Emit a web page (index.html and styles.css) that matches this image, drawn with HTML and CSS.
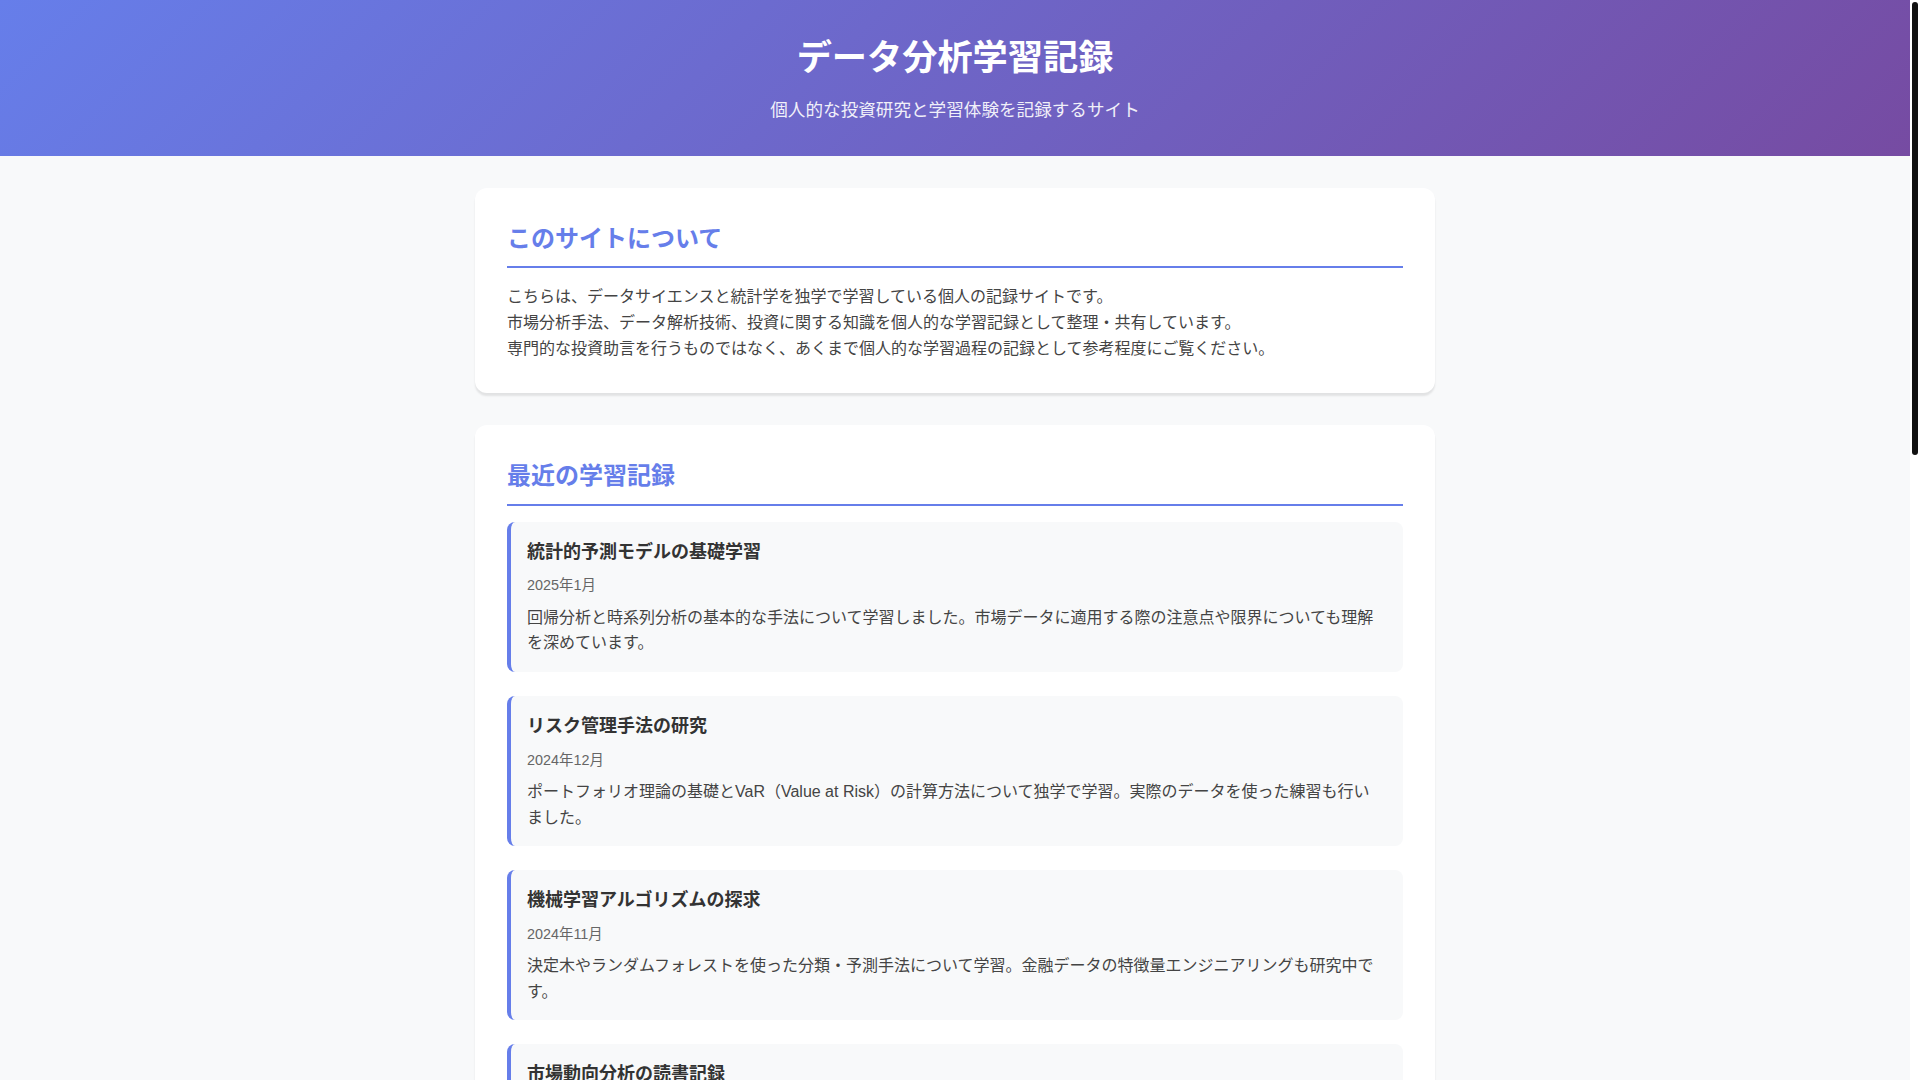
FILE: index.html
```html
<!DOCTYPE html>
<html lang="ja">
<head>
<meta charset="UTF-8">
<title>データ分析学習記録</title>
<link rel="stylesheet" href="styles.css">
</head>
<body>
<header class="site-header">
  <h1 class="site-title">データ分析学習記録</h1>
  <p class="site-subtitle">個人的な投資研究と学習体験を記録するサイト</p>
</header>
<main class="container">
  <section class="card">
    <h2 class="card-title">このサイトについて</h2>
    <p class="card-text">こちらは、データサイエンスと統計学を独学で学習している個人の記録サイトです。<br>市場分析手法、データ解析技術、投資に関する知識を個人的な学習記録として整理・共有しています。<br>専門的な投資助言を行うものではなく、あくまで個人的な学習過程の記録として参考程度にご覧ください。</p>
  </section>
  <section class="card">
    <h2 class="card-title">最近の学習記録</h2>
    <article class="entry">
      <h3 class="entry-title">統計的予測モデルの基礎学習</h3>
      <p class="entry-date">2025年1月</p>
      <p class="entry-desc">回帰分析と時系列分析の基本的な手法について学習しました。市場データに適用する際の注意点や限界についても理解を深めています。</p>
    </article>
    <article class="entry">
      <h3 class="entry-title">リスク管理手法の研究</h3>
      <p class="entry-date">2024年12月</p>
      <p class="entry-desc">ポートフォリオ理論の基礎とVaR（Value at Risk）の計算方法について独学で学習。実際のデータを使った練習も行いました。</p>
    </article>
    <article class="entry">
      <h3 class="entry-title">機械学習アルゴリズムの探求</h3>
      <p class="entry-date">2024年11月</p>
      <p class="entry-desc">決定木やランダムフォレストを使った分類・予測手法について学習。金融データの特徴量エンジニアリングも研究中です。</p>
    </article>
    <article class="entry">
      <h3 class="entry-title">市場動向分析の読書記録</h3>
      <p class="entry-date">2024年10月</p>
      <p class="entry-desc">行動経済学や市場の効率性に関する書籍を読み、投資家心理が価格形成に与える影響について考察しました。</p>
    </article>
    <article class="entry">
      <h3 class="entry-title">Pythonによるデータ可視化</h3>
      <p class="entry-date">2024年9月</p>
      <p class="entry-desc">pandasとmatplotlibを使って株価データの可視化を練習。移動平均やボラティリティのグラフ作成方法を学びました。</p>
    </article>
  </section>
  <section class="card">
    <h2 class="card-title">学習の方針</h2>
    <p class="card-text">理論と実践の両面から、データ分析の基礎を着実に身につけることを目標にしています。<br>学んだ内容は記録として残し、定期的に振り返りながら理解を深めています。<br>記載内容は個人の学習メモであり、正確性や将来の結果を保証するものではありません。</p>
  </section>
  <section class="card">
    <h2 class="card-title">免責事項</h2>
    <p class="card-text">当サイトの情報は個人の学習記録であり、投資の勧誘や助言を目的としたものではありません。<br>投資に関する最終的な判断は、ご自身の責任において行ってください。<br>当サイトの情報を利用したことによるいかなる損害についても責任を負いかねます。</p>
  </section>
</main>
<footer class="site-footer">
  <p class="footer-text">© 2025 データ分析学習記録 - 個人の学習記録サイト</p>
</footer>
<div class="scrollbar" aria-hidden="true"><div class="scrollbar-thumb"></div></div>
</body>
</html>
```

FILE: styles.css
```css
* {
  box-sizing: border-box;
}

html {
  margin: 0;
  padding: 0;
  background: #f8f9fa;
}

body {
  margin: 0 10px 0 0;
  padding: 0;
  font-family: "Liberation Sans", "Noto Sans CJK JP", sans-serif;
  font-size: 16px;
  line-height: 1.6;
  color: #333;
  background: #f8f9fa;
}

.scrollbar {
  position: fixed;
  top: 0;
  right: 0;
  width: 10px;
  height: 100vh;
  background: #ffffff;
  padding: 2px 2px 0;
}

.scrollbar-thumb {
  width: 6px;
  height: 453px;
  background: #111111;
  border-radius: 3px;
}

.site-header {
  background: linear-gradient(135deg, #667eea 0%, #764ba2 100%);
  color: #fff;
  text-align: center;
  padding: 32px 16px;
}

.site-title {
  margin: 0 0 11px;
  font-size: 35.2px;
  line-height: 1.5;
  font-weight: 700;
}

.site-subtitle {
  margin: 0;
  font-size: 17.6px;
  line-height: 1.6;
  opacity: 0.9;
}

.container {
  max-width: 960px;
  margin: 0 auto;
  padding: 32px 0;
}

.card {
  background: #fff;
  border-radius: 12px;
  padding: 32px;
  margin-bottom: 32px;
  box-shadow: 0 3px 2px rgba(0, 0, 0, 0.09);
}

.card-title {
  margin: 0 0 16px;
  padding-bottom: 8px;
  font-size: 24px;
  line-height: 1.6;
  font-weight: 700;
  color: #667eea;
  border-bottom: 2px solid #667eea;
}

.card-text {
  margin: 0;
  color: #444;
}

.entry {
  background: #f8f9fa;
  border-left: 4px solid #667eea;
  border-radius: 8px;
  padding: 16px 20px 16px 16px;
  margin-bottom: 24px;
}

.entry:last-child {
  margin-bottom: 0;
}

.entry-title {
  margin: 0 0 8px;
  font-size: 18px;
  line-height: 1.6;
  font-weight: 700;
  color: #333;
}

.entry-date {
  margin: 0 0 8px;
  font-size: 14.4px;
  line-height: 1.55;
  color: #666;
}

.entry-desc {
  margin: 0;
  color: #444;
}

.site-footer {
  background: #333;
  color: #fff;
  text-align: center;
  padding: 32px 16px;
}

.footer-text {
  margin: 0;
  font-size: 14px;
  opacity: 0.8;
}
```
